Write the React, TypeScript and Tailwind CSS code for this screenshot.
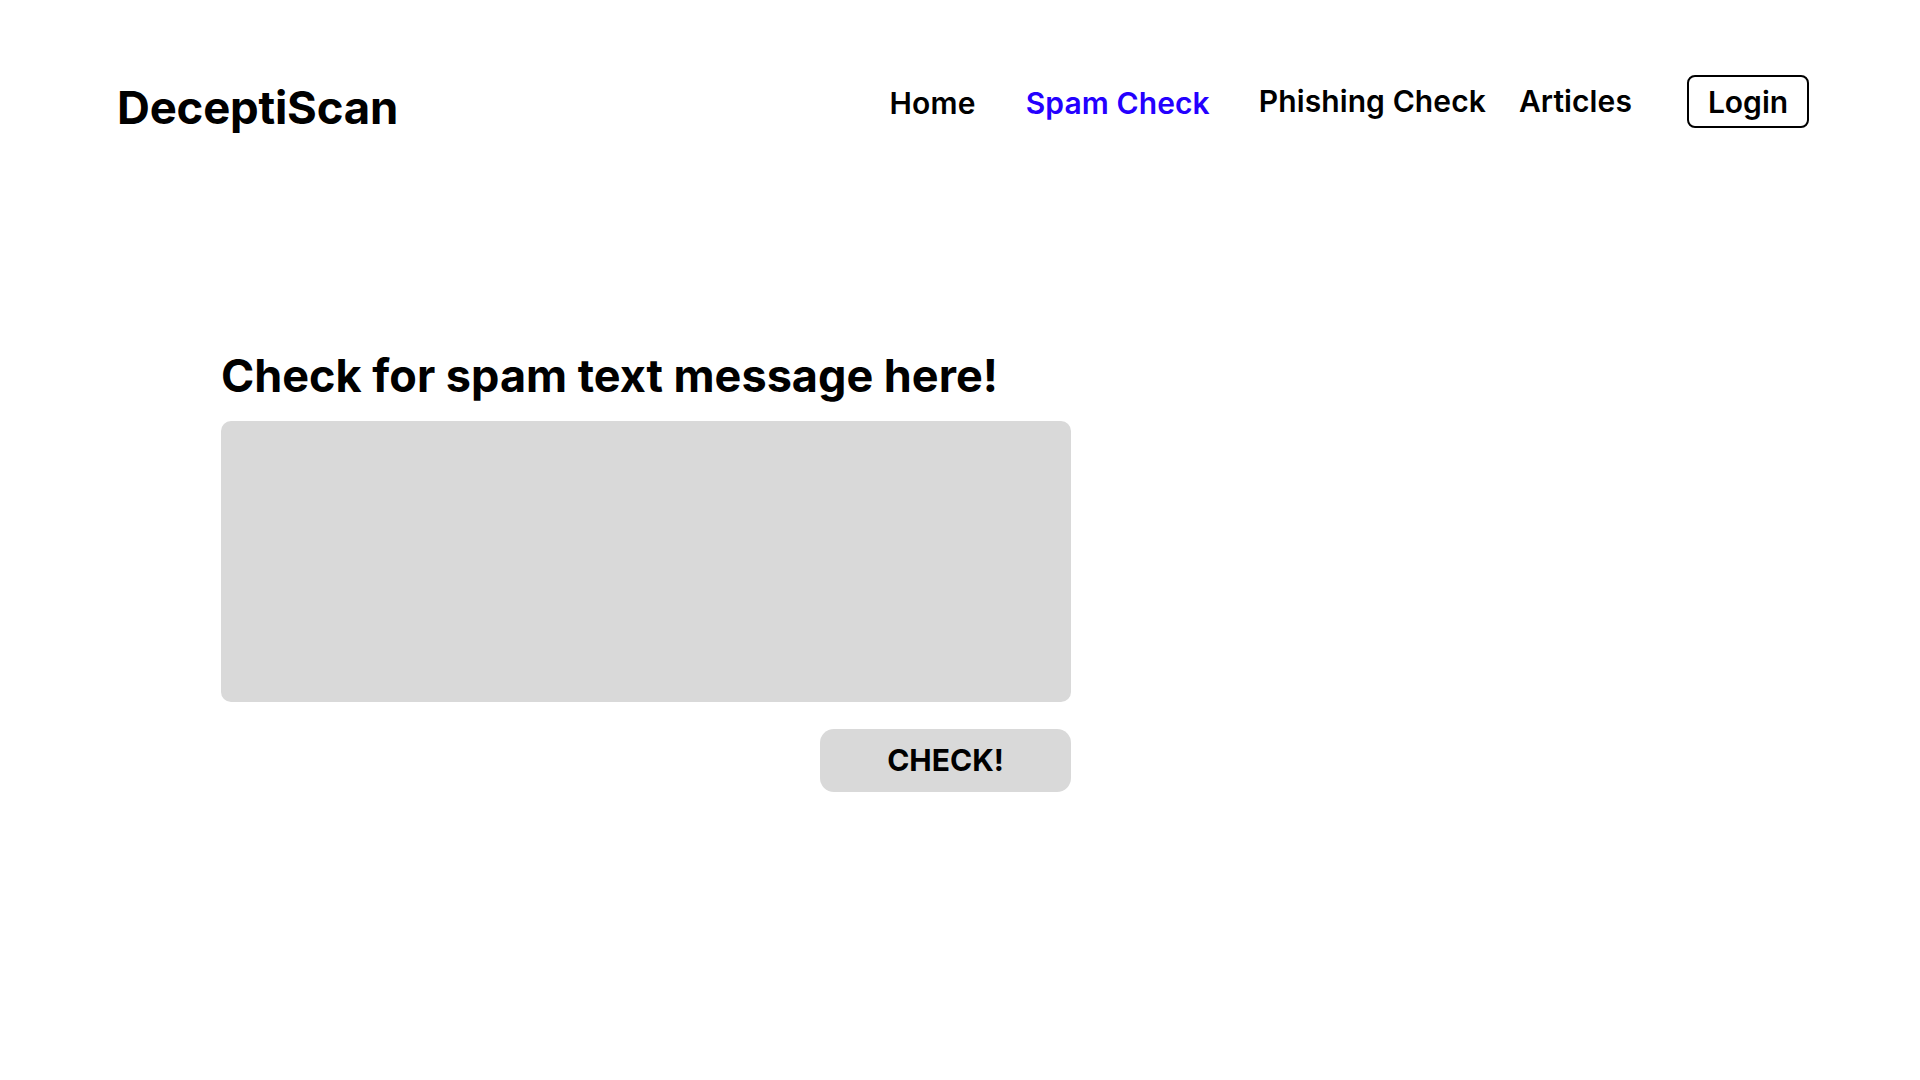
import React from "react";

export default function App() {
  return (
    <div
      className="min-h-screen w-full bg-white text-black"
      style={{ fontFamily: "Inter, 'Noto Sans', sans-serif" }}
    >
      <header className="flex h-[131px] items-start pl-[117px] pr-[111px]">
        <div className="mt-[85px] text-[45.5px] font-bold leading-none tracking-[-0.2px]">DeceptiScan</div>
        <nav className="ml-auto mt-[75px] flex items-center text-[30px] font-semibold leading-none">
          <a className="mt-[2px] tracking-[0.2px]">Home</a>
          <a className="ml-[50px] mt-[2px] tracking-[0.1px] text-[#2400ff]">Spam Check</a>
          <a className="mb-[1px] ml-[49px] tracking-[0.1px]">Phishing Check</a>
          <a className="mb-[1px] ml-[33px] tracking-[0.1px]">Articles</a>
          <button className="ml-[55px] flex h-[53px] w-[122px] items-center justify-center rounded-[8px] border-2 border-black text-[30px] font-semibold">
            Login
          </button>
        </nav>
      </header>

      <main className="ml-[221px] mt-[221.5px] w-[850px]">
        <h1 className="text-[45px] font-bold leading-none">Check for spam text message here!</h1>
        <textarea className="mt-[23px] block h-[281px] w-full resize-none rounded-[10px] bg-[#d9d9d9] p-4 outline-none" />
        <div className="mt-[27px] flex justify-end">
          <button className="h-[63px] w-[251px] rounded-[14px] bg-[#d9d9d9] text-[30px] font-bold">
            CHECK!
          </button>
        </div>
      </main>
    </div>
  );
}
